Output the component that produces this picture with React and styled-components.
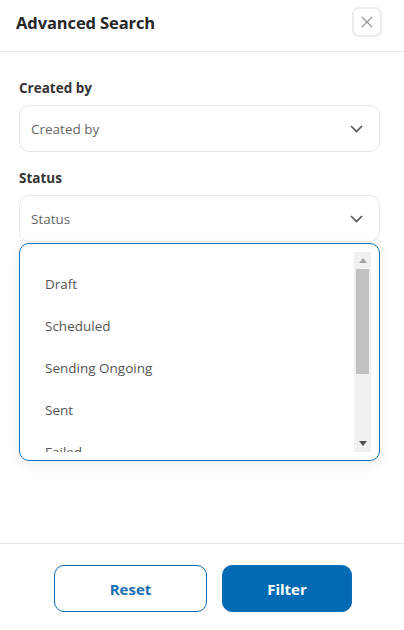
import React from "react";
import styled, { createGlobalStyle } from "styled-components";

const GlobalStyle = createGlobalStyle`
  *, *::before, *::after {
    box-sizing: border-box;
  }
  body {
    margin: 0;
    background: #fff;
    font-family: "Open Sans", "Noto Sans", sans-serif;
  }
`;

const Panel = styled.div`
  width: 404px;
  height: 630px;
  display: flex;
  flex-direction: column;
  background: #fff;
`;

const Header = styled.div`
  height: 52px;
  display: flex;
  align-items: center;
  justify-content: space-between;
  padding: 0 22px 0 16px;
  border-bottom: 1px solid #e6e6e6;
`;

const Title = styled.h2`
  margin: 0 0 6px;
  font-size: 16.5px;
  font-weight: 700;
  color: #262626;
  letter-spacing: -0.1px;
`;

const CloseButton = styled.button`
  width: 30px;
  height: 30px;
  margin-bottom: 7px;
  padding: 0;
  display: flex;
  align-items: center;
  justify-content: center;
  background: #fff;
  border: 2px solid #ececec;
  border-radius: 7px;
`;

const Body = styled.div`
  flex: 1;
  padding: 26px 24px 0 19px;
`;

const Field = styled.div`
  display: flex;
  flex-direction: column;
  margin-bottom: ${(p) => p.$gap || 0}px;
`;

const Label = styled.label`
  font-size: 13.5px;
  line-height: 20px;
  font-weight: 700;
  color: #333;
  margin-bottom: 7px;
`;

const Select = styled.div`
  height: 47px;
  display: flex;
  align-items: center;
  justify-content: space-between;
  padding: 0 16px 0 11px;
  border: 1px solid #e6e6e6;
  border-radius: 10px;
  font-size: 13.5px;
  color: #666;
`;

const Dropdown = styled.div`
  margin-top: 1px;
  height: 218px;
  display: flex;
  padding: 8px 8px 8px 8px;
  border: 1px solid #1070b8;
  border-radius: 10px;
  box-shadow: 0 4px 14px rgba(0, 0, 0, 0.07);
`;

const List = styled.div`
  flex: 1;
  height: 200px;
  overflow: hidden;
  padding-top: 11px;
`;

const Option = styled.div`
  height: 42px;
  flex-shrink: 0;
  display: flex;
  align-items: center;
  padding-left: 17px;
  font-size: 13.5px;
  color: #555;
`;

const Track = styled.div`
  width: 17px;
  height: 200px;
  display: flex;
  flex-direction: column;
  background: #f1f1f1;
`;

const Arrow = styled.div`
  height: 17px;
  display: flex;
  align-items: center;
  justify-content: center;
`;

const Thumb = styled.div`
  height: 105px;
  margin: 0 2px;
  background: #c1c1c1;
`;

const Spacer = styled.div`
  flex: 1;
`;

const Footer = styled.div`
  height: 87px;
  display: flex;
  justify-content: center;
  gap: 15px;
  padding-top: 21px;
  padding-left: 2px;
  border-top: 1px solid #e6e6e6;
`;

const Button = styled.button`
  width: ${(p) => p.$width}px;
  height: 47px;
  border-radius: 10px;
  font-family: inherit;
  font-size: 15px;
  font-weight: 700;
  border: 1px solid #0b6cb4;
  background: ${(p) => (p.$primary ? "#036bb4" : "#fff")};
  color: ${(p) => (p.$primary ? "#fff" : "#1a6db2")};
`;

const Chevron = () => (
  <svg width="13" height="8" viewBox="0 0 13 8" fill="none">
    <path d="M1 1l5.5 5.5L12 1" stroke="#555" strokeWidth="1.6" />
  </svg>
);

const statuses = ["Draft", "Scheduled", "Sending Ongoing", "Sent", "Failed"];

export default function App() {
  return (
    <Panel>
      <GlobalStyle />
      <Header>
        <Title>Advanced Search</Title>
        <CloseButton>
          <svg width="12" height="12" viewBox="0 0 12 12">
            <path d="M1 1l10 10M11 1L1 11" stroke="#9a9a9a" strokeWidth="1.4" />
          </svg>
        </CloseButton>
      </Header>
      <Body>
        <Field $gap={16}>
          <Label>Created by</Label>
          <Select>
            Created by
            <Chevron />
          </Select>
        </Field>
        <Field>
          <Label>Status</Label>
          <Select>
            Status
            <Chevron />
          </Select>
          <Dropdown>
            <List>
              {statuses.map((s) => (
                <Option key={s}>{s}</Option>
              ))}
            </List>
            <Track>
              <Arrow>
                <svg width="8" height="5" viewBox="0 0 8 5">
                  <path d="M0 5L4 0l4 5z" fill="#a3a3a3" />
                </svg>
              </Arrow>
              <Thumb />
              <Spacer />
              <Arrow>
                <svg width="8" height="5" viewBox="0 0 8 5">
                  <path d="M0 0h8L4 5z" fill="#505050" />
                </svg>
              </Arrow>
            </Track>
          </Dropdown>
        </Field>
      </Body>
      <Footer>
        <Button $width={153}>Reset</Button>
        <Button $primary $width={130}>Filter</Button>
      </Footer>
    </Panel>
  );
}
